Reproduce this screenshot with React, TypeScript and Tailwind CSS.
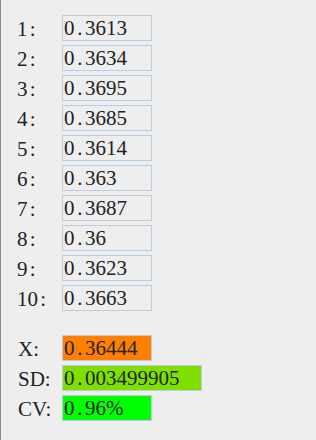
import React from 'react';

const values = ['0.3613', '0.3634', '0.3695', '0.3685', '0.3614', '0.363', '0.3687', '0.36', '0.3623', '0.3663'];

// half-width cells, like the old bitmap font in the screenshot
function Cells({ text }: { text: string }) {
  return (
    <>
      {text.split('').map((ch, i) => (
        <span key={i} className="inline-block w-[10.5px] text-center">
          {ch}
        </span>
      ))}
    </>
  );
}

function Row({ label, value, box = 'bg-[#eeeeee]', width = 'w-[90px]' }: { label: string; value: string; box?: string; width?: string }) {
  const numeric = /^\d/.test(label);
  return (
    <div className="flex h-[26px] items-start">
      <div className="w-[45px] whitespace-nowrap pt-[2px] leading-[24px] text-[#222]">
        {numeric ? <Cells text={label} /> : <span className="pl-[1px]">{label}</span>}
      </div>
      <div className={`${width} ${box} h-[26px] border border-[#b9cde3] pl-[1px] pt-[1px] leading-[23px] whitespace-nowrap text-[#222]`}>
        <Cells text={value} />
      </div>
    </div>
  );
}

export default function App() {
  return (
    <div
      className="h-[440px] w-[316px] border-l border-[#7f8e9c] bg-[#eeeeee] pl-[16px] pt-[15px] text-[21px]"
      style={{ fontFamily: '"Liberation Serif", serif' }}
    >
      <div className="flex flex-col gap-[4px]">
        {values.map((v, i) => (
          <Row key={i} label={`${i + 1}:`} value={v} />
        ))}
      </div>
      <div className="mt-[24px] flex flex-col gap-[4px]">
        <Row label="X:" value="0.36444" box="bg-[#ff8000]" />
        <Row label="SD:" value="0.003499905" box="bg-[#7fe000]" width="w-[140px]" />
        <Row label="CV:" value="0.96%" box="bg-[#00ff00]" />
      </div>
    </div>
  );
}
